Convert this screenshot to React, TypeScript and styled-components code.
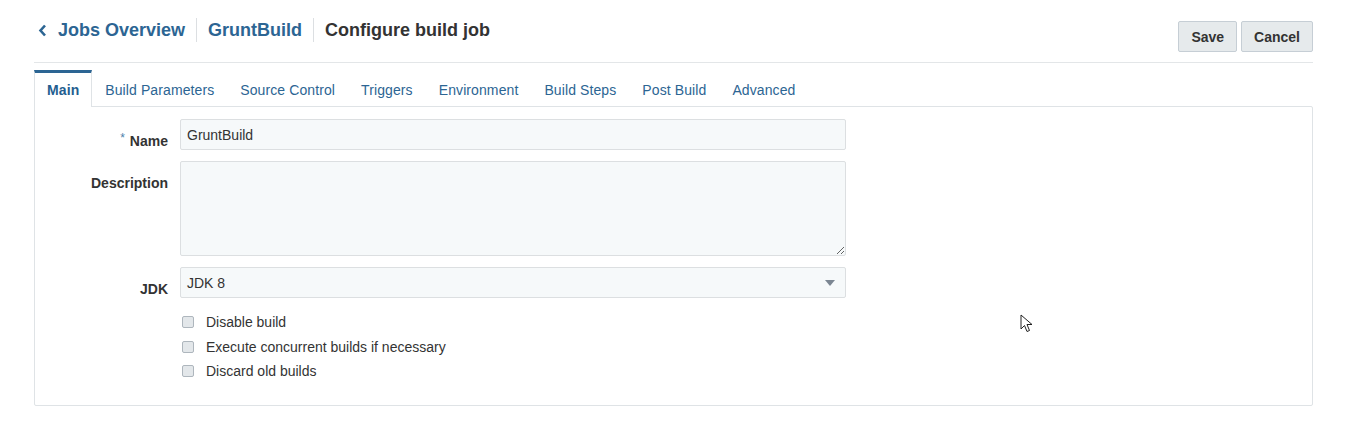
import React from "react";
import styled, { createGlobalStyle } from "styled-components";

const GlobalStyle = createGlobalStyle`
  html, body {
    margin: 0;
    padding: 0;
    background: #ffffff;
    font-family: "Liberation Sans", Arial, sans-serif;
    color: #333333;
  }
`;

const Page = styled.div`
  position: relative;
  padding: 0 36px 0 34px;
  height: 444px;
  box-sizing: border-box;
`;

const Header = styled.div`
  display: flex;
  justify-content: space-between;
  align-items: flex-start;
  height: 63px;
  border-bottom: 1px solid #e3e6e8;
  box-sizing: border-box;
`;

const Crumbs = styled.div`
  display: flex;
  align-items: center;
  margin-top: 18px;
  height: 24px;
`;

const Crumb = styled.a<{ $current?: boolean }>`
  display: flex;
  align-items: center;
  gap: 11px;
  font-size: 18px;
  font-weight: bold;
  color: ${(p) => (p.$current ? "#333333" : "#2c6593")};
  text-decoration: none;
  padding: 0 11px;
  height: 24px;
  border-left: 1px solid #dcdfe2;
  &:first-child {
    padding-left: 4px;
    border-left: none;
  }
`;

const Actions = styled.div`
  display: flex;
  gap: 4px;
  margin-top: 21px;
`;

const Button = styled.button`
  height: 31px;
  padding: 0 12px;
  font-family: "Liberation Sans", Arial, sans-serif;
  font-size: 14px;
  font-weight: bold;
  color: #333333;
  background: #e6eaec;
  border: 1px solid #c6ced5;
  border-radius: 2px;
`;

const Tabs = styled.div`
  display: flex;
  margin-top: 7px;
  height: 37px;
  position: relative;
  z-index: 1;
`;

const Tab = styled.div<{ $active?: boolean }>`
  display: flex;
  align-items: center;
  padding: 2px 13px 0;
  font-size: 14px;
  letter-spacing: 0.1px;
  color: ${(p) => (p.$active ? "#245e8f" : "#2c6593")};
  font-weight: ${(p) => (p.$active ? "bold" : "normal")};
  box-sizing: border-box;
  ${(p) =>
    p.$active
      ? `
    border-top: 3px solid #2c6593;
    border-left: 1px solid #dfe3e6;
    border-right: 1px solid #dfe3e6;
    background: #ffffff;
    padding: 0 12px;
  `
      : ""}
`;

const Panel = styled.div`
  margin-top: -1px;
  border: 1px solid #dfe3e6;
  border-radius: 0 2px 2px 2px;
  padding: 12px 0 22px;
  height: 300px;
  box-sizing: border-box;
`;

const Form = styled.div`
  display: grid;
  grid-template-columns: 133px 666px;
  column-gap: 12px;
  row-gap: 11px;
  align-items: start;
`;

const Label = styled.label`
  text-align: right;
  font-size: 14px;
  font-weight: bold;
  color: #333333;
  padding-top: 14px;
  line-height: 16px;
`;

const Star = styled.span`
  position: relative;
  top: -4px;
  color: #4a7faa;
  font-weight: normal;
  font-size: 12px;
  margin-right: 5px;
`;

const fieldBase = `
  width: 100%;
  box-sizing: border-box;
  border: 1px solid #dcdfe1;
  border-radius: 2px;
  background: #f6f9fa;
  font-family: "Liberation Sans", Arial, sans-serif;
  font-size: 14px;
  color: #333333;
  padding: 0 6px;
  outline: none;
`;

const Input = styled.input`
  ${fieldBase}
  height: 31px;
  display: block;
`;

const TextArea = styled.textarea`
  ${fieldBase}
  height: 95px;
  resize: vertical;
  display: block;
`;

const Select = styled.div`
  ${fieldBase}
  height: 31px;
  display: flex;
  align-items: center;
  justify-content: space-between;
  padding-right: 10px;
`;

const Options = styled.div`
  grid-column: 2;
  display: flex;
  flex-direction: column;
  margin-top: 1px;
`;

const CheckRow = styled.label`
  display: flex;
  align-items: center;
  gap: 12px;
  height: 24.5px;
  font-size: 14px;
  color: #333333;
`;

const Box = styled.span`
  width: 10px;
  height: 10px;
  margin-left: 2px;
  border: 1px solid #aeb6bd;
  border-radius: 2px;
  background: #e3e7ea;
`;

const Pointer = styled.svg`
  position: absolute;
  left: 1020px;
  top: 314px;
`;

const tabs = [
  "Main",
  "Build Parameters",
  "Source Control",
  "Triggers",
  "Environment",
  "Build Steps",
  "Post Build",
  "Advanced",
];

const options = [
  "Disable build",
  "Execute concurrent builds if necessary",
  "Discard old builds",
];

export default function App() {
  return (
    <Page>
      <GlobalStyle />
      <Header>
        <Crumbs>
          <Crumb>
            <svg width="9" height="13" viewBox="0 0 9 13">
              <polyline
                points="7,1.5 2.5,6.5 7,11.5"
                fill="none"
                stroke="#2c6593"
                strokeWidth="2.6"
              />
            </svg>
            Jobs Overview
          </Crumb>
          <Crumb>GruntBuild</Crumb>
          <Crumb $current>Configure build job</Crumb>
        </Crumbs>
        <Actions>
          <Button>Save</Button>
          <Button>Cancel</Button>
        </Actions>
      </Header>
      <Tabs>
        {tabs.map((t, i) => (
          <Tab key={t} $active={i === 0}>
            {t}
          </Tab>
        ))}
      </Tabs>
      <Panel>
        <Form>
          <Label>
            <Star>*</Star>Name
          </Label>
          <Input defaultValue="GruntBuild" />
          <Label>Description</Label>
          <TextArea />
          <Label>JDK</Label>
          <Select>
            <span>JDK 8</span>
            <svg width="10" height="6" viewBox="0 0 10 6">
              <polygon points="0,0 10,0 5,6" fill="#7b8692" />
            </svg>
          </Select>
          <Options>
            {options.map((o) => (
              <CheckRow key={o}>
                <Box />
                {o}
              </CheckRow>
            ))}
          </Options>
        </Form>
      </Panel>
      <Pointer width="14" height="20" viewBox="0 0 14 20">
        <path
          d="M1 1 L1 15 L4.5 11.5 L7 17.5 L9.5 16.5 L7 10.5 L12 10.5 Z"
          fill="#ffffff"
          stroke="#222222"
          strokeWidth="1"
        />
      </Pointer>
    </Page>
  );
}
